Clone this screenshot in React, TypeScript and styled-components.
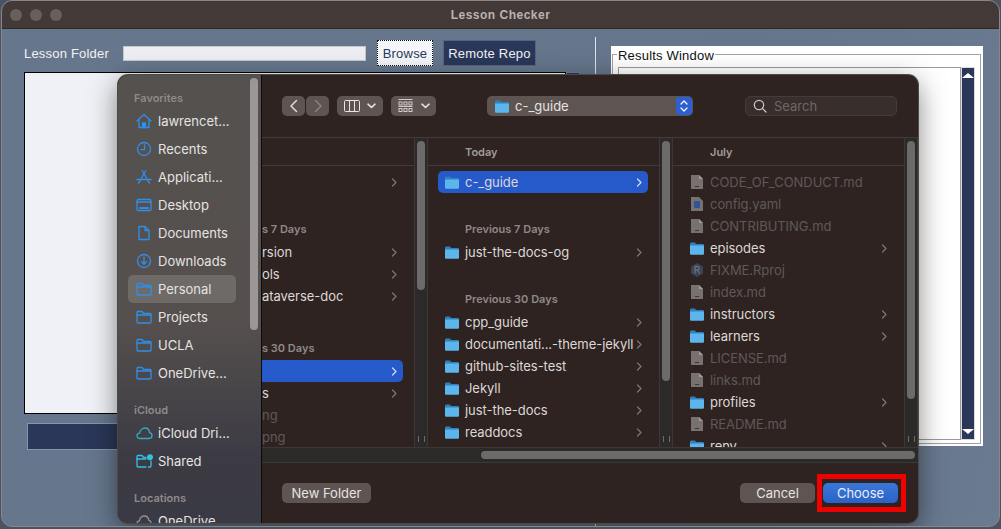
import * as React from 'react';
import styled, { createGlobalStyle } from 'styled-components';

const SANS = '"Inter", "Liberation Sans", sans-serif';

const GlobalStyle = createGlobalStyle`
  html, body { margin: 0; padding: 0; background: #4a5263; }
  body { width: 1001px; height: 529px; overflow: hidden; font-family: "Liberation Sans", sans-serif; }
`;

// ICONS
const Stroke = styled.svg`
  flex: none;
  fill: none;
  stroke: #2f8fe8;
  stroke-width: 1.3;
  stroke-linecap: round;
  stroke-linejoin: round;
`;

const HomeIcon = () => (
  <Stroke width="16" height="16" viewBox="0 0 16 16">
    <path d="M1 8 8 1.5 15 8" />
    <path d="M3 6.5V14.5H13V6.5" />
    <path d="M6.5 14.5V10H9.5V14.5Z" fill="#2f8fe8" />
  </Stroke>
);
const ClockIcon = () => (
  <Stroke width="16" height="16" viewBox="0 0 16 16">
    <circle cx="8" cy="8" r="6.5" />
    <path d="M8.5 3.8V8.6H4.8" />
  </Stroke>
);
const AppsIcon = () => (
  <Stroke width="16" height="16" viewBox="0 0 16 16">
    <path d="M9.8 1.5 3.6 12.5" />
    <path d="M6.2 1.5 12.4 12.5" />
    <path d="M1 10.5H15" />
    <path d="M2.5 14 3.6 12.5M13.5 14 12.4 12.5" />
  </Stroke>
);
const DesktopIcon = () => (
  <Stroke width="16" height="14" viewBox="0 0 16 14">
    <rect x="1" y="1.5" width="14" height="11" rx="1.2" />
    <path d="M1 4H15" />
    <path d="M4 10H12" strokeWidth="1.8" />
  </Stroke>
);
const DocIcon = () => (
  <Stroke width="16" height="16" viewBox="0 0 16 16">
    <path d="M3 1.5H9L13 5.5V14.5H3Z" />
    <path d="M9 1.5V5.5H13" />
  </Stroke>
);
const DownloadIcon = () => (
  <Stroke width="16" height="16" viewBox="0 0 16 16">
    <circle cx="8" cy="8" r="6.5" />
    <path d="M8 4V11M5.5 8.8 8 11.2 10.5 8.8" />
  </Stroke>
);
const FolderLine = () => (
  <Stroke width="16" height="14" viewBox="0 0 16 14">
    <path d="M1 12V2.5C1 1.8 1.5 1.5 2 1.5H6L7.5 3.5H14C14.6 3.5 15 3.9 15 4.5V12C15 12.6 14.6 13 14 13H2C1.4 13 1 12.6 1 12Z" />
    <path d="M1 5H15" />
  </Stroke>
);
const CloudIcon = () => (
  <Stroke width="17" height="14" viewBox="0 0 17 14" style={{ stroke: '#3aa6c4' }}>
    <path d="M4 12.5C2 12.5 1 11.2 1 9.8 1 8.2 2.3 7.2 3.6 7.2 4 4 6.5 2 9 2 11.6 2 13.3 4 13.5 6.6 15 6.8 16 8 16 9.6 16 11.4 14.8 12.5 13 12.5Z" />
  </Stroke>
);
const SharedIcon = () => (
  <Stroke width="17" height="14" viewBox="0 0 17 14" style={{ stroke: '#35bfe0' }}>
    <path d="M10 13H2C1.4 13 1 12.6 1 12V2.5C1 1.8 1.5 1.5 2 1.5H6L7.5 3.5H10" />
    <path d="M1 5H10" />
    <path d="M15 7V12C15 12.6 14.6 13 14 13H12.5" />
    <circle cx="14" cy="3.2" r="2.4" fill="#35bfe0" />
  </Stroke>
);
const DriveIcon = () => (
  <Stroke width="16" height="12" viewBox="0 0 16 12" style={{ stroke: '#8d8f94' }}>
    <path d="M4 11C2 11 1 9.8 1 8.4 1 7 2.2 6 3.4 6 3.8 3 6 1 8.4 1 11 1 12.6 3 12.8 5.4 14.4 5.6 15 7 15 8.2 15 10 14 11 12.4 11Z" />
  </Stroke>
);
const BlueFolder = () => (
  <svg width="14" height="13" viewBox="0 0 14 13" style={{ flex: 'none' }}>
    <path d="M0 2C0 1 .6.5 1.4.5H4.8L6.2 2H12.6C13.4 2 14 2.6 14 3.4V4H0Z" fill="#2f80bd" />
    <path d="M0 3.4H14V11.4C14 12.2 13.4 12.8 12.6 12.8H1.4C.6 12.8 0 12.2 0 11.4Z" fill="#5cb6ec" />
  </svg>
);
const FileIcon = () => (
  <svg width="12" height="14" viewBox="0 0 12 14" style={{ flex: 'none', margin: '0 1px' }}>
    <path d="M0 0H8L12 4V14H0Z" fill="#77726f" />
    <path d="M8 0 12 4H8Z" fill="#a09b98" />
    <rect x="4" y="11" width="4" height="1" fill="#3c3735" />
  </svg>
);
const YamlIcon = () => (
  <svg width="12" height="14" viewBox="0 0 12 14" style={{ flex: 'none', margin: '0 1px' }}>
    <path d="M0 0H8L12 4V14H0Z" fill="#77726f" />
    <rect x="3" y="4" width="6" height="7" rx="1" fill="#2f5596" />
  </svg>
);
const RprojIcon = () => (
  <svg width="14" height="14" viewBox="0 0 14 14" style={{ flex: 'none' }}>
    <path d="M7 0 13 3.5V10.5L7 14 1 10.5V3.5Z" fill="#3b4450" />
    <path d="M5 3.5V10.5M5 3.5H8C9.6 3.5 9.6 7 8 7H5M7.5 7 9.5 10.5" fill="none" stroke="#6d8094" />
  </svg>
);
const SearchIcon = () => (
  <svg width="14" height="14" viewBox="0 0 14 14" fill="none" stroke="#c9c6c4" strokeWidth="1.2" strokeLinecap="round">
    <circle cx="6" cy="6" r="4.7" />
    <path d="M9.5 9.5 13 13" />
  </svg>
);
const Chevron = () => (
  <svg width="6" height="9" viewBox="0 0 6 9" fill="none" stroke="currentColor" strokeWidth="1.2" strokeLinecap="round" strokeLinejoin="round">
    <path d="M1.5 1 5 4.5 1.5 8" />
  </svg>
);
const Caret = () => (
  <svg width="9" height="6" viewBox="0 0 9 6" fill="none" stroke="#e4e1df" strokeWidth="1.6" strokeLinecap="round" strokeLinejoin="round">
    <path d="M1 1.2 4.5 4.5 8 1.2" />
  </svg>
);

// DATA
type Item = { name: string; kind?: 'folder' | 'file' | 'yaml' | 'rproj' | 'bare'; dim?: boolean; selected?: boolean; chevron?: boolean };

const favorites = [
  { label: 'lawrencet...', icon: <HomeIcon /> },
  { label: 'Recents', icon: <ClockIcon /> },
  { label: 'Applicati...', icon: <AppsIcon /> },
  { label: 'Desktop', icon: <DesktopIcon /> },
  { label: 'Documents', icon: <DocIcon /> },
  { label: 'Downloads', icon: <DownloadIcon /> },
  { label: 'Personal', icon: <FolderLine />, active: true },
  { label: 'Projects', icon: <FolderLine /> },
  { label: 'UCLA', icon: <FolderLine /> },
  { label: 'OneDrive...', icon: <FolderLine /> },
];

const folder = (name: string, selected = false): Item => ({ name, kind: 'folder', chevron: true, selected });
const bare = (name: string, selected = false): Item => ({ name, kind: 'bare', chevron: true, selected });
const file = (name: string, kind: Item['kind'] = 'file'): Item => ({ name, kind, dim: true });

const julyItems: Item[] = [
  file('CODE_OF_CONDUCT.md'),
  file('config.yaml', 'yaml'),
  file('CONTRIBUTING.md'),
  folder('episodes'),
  file('FIXME.Rproj', 'rproj'),
  file('index.md'),
  folder('instructors'),
  folder('learners'),
  file('LICENSE.md'),
  file('links.md'),
  folder('profiles'),
  file('README.md'),
  folder('renv'),
];

const FileRow = ({ item }: { item: Item }) => (
  <Row $selected={item.selected} $dim={item.dim} $bare={item.kind === 'bare'}>
    {item.kind === 'folder' && <BlueFolder />}
    {item.kind === 'file' && <FileIcon />}
    {item.kind === 'yaml' && <YamlIcon />}
    {item.kind === 'rproj' && <RprojIcon />}
    <RowName>{item.name}</RowName>
    {item.chevron && <RowChevron $selected={item.selected}><Chevron /></RowChevron>}
  </Row>
);

export default function App() {
  return (
    <>
      <GlobalStyle />
      <Window>
        <TitleBar>
          <Lights>
            <Light />
            <Light />
            <Light />
          </Lights>
          <Title>Lesson Checker</Title>
        </TitleBar>
        <Body>
          <LeftPane>
            <FolderRow>
              <FieldLabel>Lesson Folder</FieldLabel>
              <PathInput />
              <BrowseButton>Browse</BrowseButton>
              <RepoButton>Remote Repo</RepoButton>
            </FolderRow>
            <ListRow>
              <FileListBox />
              <ListScroll />
            </ListRow>
            <RunBar />
          </LeftPane>
          <Divider />
          <ResultsPane>
            <Results>
              <ResultsLegend>Results Window</ResultsLegend>
              <ResultsFrame>
                <ResultsText />
                <ResultsScroll>
                  <ScrollArrow $up />
                  <ScrollArrow />
                </ResultsScroll>
              </ResultsFrame>
            </Results>
          </ResultsPane>
        </Body>

        <Dialog>
          <Sidebar>
            <SidebarList>
              <SideHeading>Favorites</SideHeading>
              {favorites.map(f => (
                <SideItem key={f.label} $active={f.active}>
                  <SideIcon>{f.icon}</SideIcon>
                  {f.label}
                </SideItem>
              ))}
              <SideHeading $spaced>iCloud</SideHeading>
              <SideItem><SideIcon><CloudIcon /></SideIcon>iCloud Dri...</SideItem>
              <SideItem><SideIcon><SharedIcon /></SideIcon>Shared</SideItem>
              <SideHeading $spaced>Locations</SideHeading>
              <SideItem><SideIcon><DriveIcon /></SideIcon>OneDrive</SideItem>
            </SidebarList>
            <SidebarThumb />
          </Sidebar>

          <Main>
            <Toolbar>
              <NavGroup>
                <ToolButton $w={23}>
                  <svg width="10" height="14" viewBox="0 0 10 14" fill="none" stroke="#e8e5e3" strokeWidth="1.4" strokeLinecap="round" strokeLinejoin="round"><path d="M7.5 1.5 2 7l5.5 5.5" /></svg>
                </ToolButton>
                <ToolButton $w={23}>
                  <svg width="10" height="14" viewBox="0 0 10 14" fill="none" stroke="#8b8583" strokeWidth="1.4" strokeLinecap="round" strokeLinejoin="round"><path d="M2.5 1.5 8 7l-5.5 5.5" /></svg>
                </ToolButton>
              </NavGroup>
              <ToolButton $w={46} $gap={7}>
                <svg width="16" height="12" viewBox="0 0 16 12" fill="none" stroke="#e8e5e3" strokeWidth="1"><rect x=".5" y=".5" width="15" height="11" rx="1" /><path d="M5.5 .5V11.5M10.5 .5V11.5" /></svg>
                <Caret />
              </ToolButton>
              <ToolButton $w={45} $gap={8}>
                <svg width="15" height="14" viewBox="0 0 15 14" fill="none" stroke="#cfcbc9" strokeWidth="1"><path d="M.5 .5H14.5" /><rect x="1" y="3" width="3" height="3" /><rect x="6" y="3" width="3" height="3" /><rect x="11" y="3" width="3" height="3" /><path d="M.5 7.5H14.5" /><rect x="1" y="9.5" width="3" height="3" /><rect x="6" y="9.5" width="3" height="3" /><rect x="11" y="9.5" width="3" height="3" /></svg>
                <Caret />
              </ToolButton>
              <PathPopup>
                <BlueFolder />
                <PathName>c-_guide</PathName>
                <Stepper>
                  <svg width="8" height="12" viewBox="0 0 8 12" fill="none" stroke="#fff" strokeWidth="1.2" strokeLinecap="round" strokeLinejoin="round"><path d="M1 4 4 1l3 3M1 8l3 3 3-3" /></svg>
                </Stepper>
              </PathPopup>
              <SearchBox>
                <SearchIcon />
                <SearchText>Search</SearchText>
              </SearchBox>
            </Toolbar>

            <Columns>
              <Column $w={166}>
                <ColumnMain>
                  <ColumnHeader />
                  <RowList>
                    <FileRow item={bare('')} />
                    <GroupLabel $flush>s 7 Days</GroupLabel>
                    <FileRow item={bare('rsion')} />
                    <FileRow item={bare('ols')} />
                    <FileRow item={bare('ataverse-doc')} />
                    <GroupLabel $flush $gap={29}>s 30 Days</GroupLabel>
                    <FileRow item={bare('', true)} />
                    <FileRow item={bare('s')} />
                    <FileRow item={{ name: 'ng', kind: 'bare', dim: true }} />
                    <FileRow item={{ name: 'png', kind: 'bare', dim: true }} />
                  </RowList>
                </ColumnMain>
                <ScrollTrack>
                  <ScrollThumb $h={149} />
                  <Grip />
                </ScrollTrack>
              </Column>

              <Column $w={245}>
                <ColumnMain>
                  <ColumnHeader $inset={37}>Today</ColumnHeader>
                  <RowList>
                    <FileRow item={folder('c-_guide', true)} />
                    <GroupLabel>Previous 7 Days</GroupLabel>
                    <FileRow item={folder('just-the-docs-og')} />
                    <GroupLabel>Previous 30 Days</GroupLabel>
                    <FileRow item={folder('cpp_guide')} />
                    <FileRow item={folder('documentati...-theme-jekyll')} />
                    <FileRow item={folder('github-sites-test')} />
                    <FileRow item={folder('Jekyll')} />
                    <FileRow item={folder('just-the-docs')} />
                    <FileRow item={folder('readdocs')} />
                  </RowList>
                </ColumnMain>
                <ScrollTrack>
                  <ScrollThumb $h={240} />
                  <Grip />
                </ScrollTrack>
              </Column>

              <Column $w={245}>
                <ColumnMain>
                  <ColumnHeader $inset={37}>July</ColumnHeader>
                  <RowList>
                    {julyItems.map(item => <FileRow key={item.name} item={item} />)}
                  </RowList>
                </ColumnMain>
                <ScrollTrack>
                  <ScrollThumb $h={258} />
                  <Grip />
                </ScrollTrack>
              </Column>
            </Columns>

            <HScroll>
              <HThumb />
            </HScroll>

            <Footer>
              <PushButton $w={89}>New Folder</PushButton>
              <FooterRight>
                <PushButton $w={75}>Cancel</PushButton>
                <ChooseWrap>
                  <ChooseButton>Choose</ChooseButton>
                  <Highlight />
                </ChooseWrap>
              </FooterRight>
            </Footer>
          </Main>
        </Dialog>
      </Window>
    </>
  );
}

// STYLE
const Window = styled.div`
  position: relative;
  box-sizing: border-box;
  width: 999px;
  height: 527px;
  margin-left: 1px;
  border-radius: 11px;
  border: 1px solid #8b8684;
  overflow: hidden;
  background: linear-gradient(100deg, #66778d 0%, #65768c 70%, #6a7a90 100%);
`;

const TitleBar = styled.div`
  position: relative;
  height: 28px;
  background: #433a38;
  border-bottom: 1px solid #2c2827;
  box-sizing: border-box;
  display: flex;
  align-items: center;
  justify-content: center;
`;

const Lights = styled.div`
  position: absolute;
  left: 8px;
  top: 8px;
  display: flex;
  gap: 8px;
`;

const Light = styled.span`
  width: 12px;
  height: 12px;
  border-radius: 50%;
  background: #665f5c;
`;

const Title = styled.span`
  font-size: 12px;
  font-weight: 700;
  letter-spacing: 0.5px;
  color: #b9b4b1;
`;

const Body = styled.div`
  display: flex;
  padding: 11px 0 0 22px;
  letter-spacing: 0.2px;
`;

const LeftPane = styled.div`
  width: 556px;
  display: flex;
  flex-direction: column;
`;

const FolderRow = styled.div`
  display: flex;
  align-items: center;
  height: 26px;
`;

const FieldLabel = styled.span`
  width: 99px;
  font-size: 13px;
  color: #f2f2f2;
`;

const PathInput = styled.div`
  box-sizing: border-box;
  width: 243px;
  height: 15px;
  background: #edeef2;
  border: 1px solid #c4c7cc;
`;

const BrowseButton = styled.div`
  box-sizing: border-box;
  margin-left: 11px;
  width: 56px;
  height: 26px;
  display: flex;
  align-items: center;
  justify-content: center;
  background: #f4f5f8;
  border: 1px dotted #111;
  font-size: 13px;
  color: #2a3a5c;
`;

const RepoButton = styled.div`
  box-sizing: border-box;
  margin-left: 10px;
  width: 93px;
  height: 26px;
  display: flex;
  align-items: center;
  justify-content: center;
  background: #2a3758;
  border: 1px solid #55657f;
  font-size: 13px;
  color: #f0f2f6;
`;

const ListRow = styled.div`
  display: flex;
  margin-top: 6px;
`;

const FileListBox = styled.div`
  box-sizing: border-box;
  width: 542px;
  height: 342px;
  background: #eff1f6;
  border: 1px solid #000;
`;

const ListScroll = styled.div`
  width: 14px;
  height: 30px;
  background: #2a3758;
  border: 1px solid #6f7f96;
  box-sizing: border-box;
`;

const RunBar = styled.div`
  box-sizing: border-box;
  margin: 9px 0 0 3px;
  width: 520px;
  height: 27px;
  background: #2a3758;
  border: 1px solid #8896ab;
`;

const Divider = styled.div`
  width: 1px;
  margin: -3px 0 0 15px;
  height: 490px;
  background: #dfe2e7;
`;

const ResultsPane = styled.div`
  margin: 6px 0 0 15px;
`;

const Results = styled.div`
  position: relative;
  box-sizing: border-box;
  width: 372px;
  height: 400px;
  padding: 8px 2px 2px 1px;
  background: #fff;
`;

const ResultsLegend = styled.span`
  position: absolute;
  left: 6px;
  top: 2px;
  padding: 0 1px;
  background: #fff;
  font-size: 13px;
  color: #111;
`;

const ResultsFrame = styled.div`
  box-sizing: border-box;
  height: 100%;
  padding: 12px 5px 3px 5px;
  border: 1px solid #a3a3a3;
  display: flex;
`;

const ResultsText = styled.div`
  flex: 1;
  border: 1px solid #9a9a9a;
  background: #fff;
`;

const ResultsScroll = styled.div`
  box-sizing: border-box;
  width: 14px;
  background: #2a3758;
  border: 1px solid #d8dbe0;
  display: flex;
  flex-direction: column;
  justify-content: space-between;
`;

const ScrollArrow = styled.span<{ $up?: boolean }>`
  box-sizing: border-box;
  height: 10px;
  display: block;
  background: #2a3758;
  border-left: 6px solid transparent;
  border-right: 6px solid transparent;
  ${p => (p.$up ? 'border-bottom: 5px solid #fff; border-top: 3px solid #2a3758;' : 'border-top: 5px solid #fff; border-bottom: 3px solid #2a3758;')}
`;

const Dialog = styled.div`
  position: absolute;
  left: 116px;
  top: 74px;
  width: 800px;
  height: 448px;
  display: flex;
  border-radius: 10px;
  overflow: hidden;
  background: #2e2321;
  box-shadow: 0 0 0 1px #4d4947, 0 8px 28px rgba(0, 0, 0, 0.5);
  font-family: ${SANS};
`;

const Sidebar = styled.div`
  position: relative;
  flex: none;
  box-sizing: border-box;
  width: 144px;
  overflow: hidden;
  background: linear-gradient(180deg, #55514e 0%, #55504e 55%, #3c3b44 85%, #3a3a44 100%);
  border-right: 1px solid #0c0a0a;
`;

const SidebarList = styled.div`
  padding: 14px 0 0 10px;
  display: flex;
  flex-direction: column;
`;

const SideHeading = styled.div<{ $spaced?: boolean }>`
  height: 18px;
  line-height: 18px;
  margin: ${p => (p.$spaced ? '14px' : '0')} 0 0 6px;
  font-size: 11px;
  font-weight: 600;
  color: #8e8a88;
`;

const SideItem = styled.div<{ $active?: boolean }>`
  box-sizing: border-box;
  width: 108px;
  height: 28px;
  flex: none;
  display: flex;
  align-items: center;
  padding-left: 8px;
  border-radius: 5px;
  font-size: 13px;
  white-space: nowrap;
  color: #e6e3e1;
  background: ${p => (p.$active ? '#6e6a67' : 'transparent')};
`;

const SideIcon = styled.span`
  width: 22px;
  flex: none;
  display: flex;
  align-items: center;
`;

const SidebarThumb = styled.div`
  position: absolute;
  left: 132px;
  top: 3px;
  width: 8px;
  height: 252px;
  border-radius: 4px;
  background: #9c9796;
`;

const Main = styled.div`
  flex: 1;
  min-width: 0;
  min-height: 0;
  display: flex;
  flex-direction: column;
`;

const Toolbar = styled.div`
  box-sizing: border-box;
  height: 63px;
  flex: none;
  display: flex;
  align-items: center;
  gap: 8px;
  padding-left: 20px;
  border-bottom: 1px solid #443b39;
`;

const NavGroup = styled.div`
  display: flex;
  gap: 1px;
`;

const ToolButton = styled.div<{ $w: number; $gap?: number }>`
  width: ${p => p.$w}px;
  height: 20px;
  display: flex;
  align-items: center;
  justify-content: center;
  gap: ${p => p.$gap || 0}px;
  border-radius: 5px;
  background: #5e5552;
`;

const PathPopup = styled.div`
  box-sizing: border-box;
  margin-left: 43px;
  width: 206px;
  height: 20px;
  display: flex;
  align-items: center;
  padding: 0 1px 0 8px;
  gap: 6px;
  border-radius: 5px;
  background: #5e5552;
`;

const PathName = styled.span`
  flex: 1;
  font-size: 13px;
  color: #e6e3e1;
`;

const Stepper = styled.span`
  width: 16px;
  height: 18px;
  display: flex;
  align-items: center;
  justify-content: center;
  border-radius: 4px;
  background: #2c5fd0;
`;

const SearchBox = styled.div`
  box-sizing: border-box;
  margin-left: 44px;
  width: 152px;
  height: 20px;
  display: flex;
  align-items: center;
  gap: 7px;
  padding-left: 7px;
  border-radius: 5px;
  border: 1px solid #453c3a;
  background: #382e2c;
`;

const SearchText = styled.span`
  font-size: 13px;
  color: #6e6866;
`;

const Columns = styled.div`
  flex: 1;
  min-height: 0;
  display: flex;
  overflow: hidden;
`;

const Column = styled.div<{ $w: number }>`
  width: ${p => p.$w}px;
  flex: none;
  display: flex;
`;

const ColumnMain = styled.div`
  flex: 1;
  min-width: 0;
  display: flex;
  flex-direction: column;
  overflow: hidden;
`;

const ColumnHeader = styled.div<{ $inset?: number }>`
  box-sizing: border-box;
  height: 28px;
  flex: none;
  line-height: 28px;
  padding-left: ${p => p.$inset || 0}px;
  border-bottom: 1px solid #443b39;
  font-size: 11px;
  font-weight: 600;
  color: #a09b98;
`;

const RowList = styled.div`
  padding-top: 5px;
  overflow: hidden;
  flex: 1;
`;

const GroupLabel = styled.div<{ $flush?: boolean; $gap?: number }>`
  height: 24px;
  line-height: 24px;
  margin-top: ${p => p.$gap || 24}px;
  padding-left: ${p => (p.$flush ? 0 : 37)}px;
  font-size: 11px;
  font-weight: 600;
  color: #8e8987;
`;

const Row = styled.div<{ $selected?: boolean; $dim?: boolean; $bare?: boolean }>`
  height: 22px;
  display: flex;
  align-items: center;
  gap: 6px;
  margin: 0 11px 0 ${p => (p.$bare ? 0 : 10)}px;
  padding: 0 6px 0 ${p => (p.$bare ? 0 : 7)}px;
  border-radius: ${p => (p.$bare ? '0 5px 5px 0' : '5px')};
  font-size: 13px;
  letter-spacing: -0.05px;
  white-space: nowrap;
  color: ${p => (p.$dim ? '#5f5957' : '#dcd8d6')};
  background: ${p => (p.$selected ? '#2659c9' : 'transparent')};
`;

const RowName = styled.span`
  flex: 1;
  min-width: 0;
`;

const RowChevron = styled.span<{ $selected?: boolean }>`
  display: flex;
  margin-left: -4px;
  color: ${p => (p.$selected ? '#d5def5' : '#7d7775')};
`;

const ScrollTrack = styled.div`
  box-sizing: border-box;
  width: 14px;
  flex: none;
  display: flex;
  flex-direction: column;
  align-items: center;
  padding: 3px 0 3px;
  background: #2c2a29;
  border-left: 1px solid #3d3836;
  border-right: 1px solid #3d3836;
`;

const ScrollThumb = styled.div<{ $h: number }>`
  width: 8px;
  height: ${p => p.$h}px;
  border-radius: 4px;
  background: #6d6b6a;
`;

const Grip = styled.div`
  margin-top: auto;
  margin-bottom: 2px;
  width: 5px;
  height: 6px;
  border-left: 1px solid #6d6b6a;
  border-right: 1px solid #6d6b6a;
`;

const HScroll = styled.div`
  box-sizing: border-box;
  height: 16px;
  flex: none;
  display: flex;
  align-items: center;
  justify-content: flex-end;
  padding-right: 3px;
  background: #2c2a29;
  border-top: 1px solid #3d3836;
  border-bottom: 1px solid #3d3836;
`;

const HThumb = styled.div`
  width: 434px;
  height: 8px;
  border-radius: 4px;
  background: #6d6b6a;
`;

const Footer = styled.div`
  flex: none;
  height: 60px;
  box-sizing: border-box;
  display: flex;
  align-items: center;
  justify-content: space-between;
  padding: 0 20px 0 20px;
`;

const FooterRight = styled.div`
  display: flex;
  gap: 8px;
`;

const PushButton = styled.div<{ $w: number }>`
  width: ${p => p.$w}px;
  height: 20px;
  display: flex;
  align-items: center;
  justify-content: center;
  border-radius: 5px;
  font-size: 13px;
  color: #e6e3e1;
  background: #5e5552;
`;

const ChooseWrap = styled.div`
  position: relative;
`;

const ChooseButton = styled.div`
  width: 75px;
  height: 20px;
  display: flex;
  align-items: center;
  justify-content: center;
  border-radius: 5px;
  font-size: 13px;
  color: #e9eefb;
  background: linear-gradient(180deg, #3a77d8, #2c62c6);
`;

const Highlight = styled.div`
  position: absolute;
  top: -9px;
  left: -6px;
  right: -8px;
  bottom: -9px;
  border: 5px solid #f10000;
`;
